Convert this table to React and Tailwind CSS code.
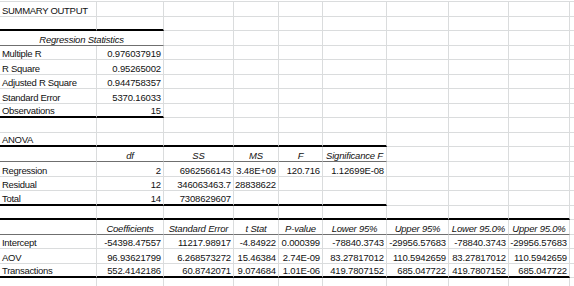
import React from "react";

// column widths of the sheet, A..I (J takes what is left)
const W = [
  "w-[97px]",
  "w-[67px]",
  "w-[70px]",
  "w-[45px]",
  "w-[44px]",
  "w-[64px]",
  "w-[62px]",
  "w-[60px]",
  "w-[61px]",
];

const rows = [
  { cells: ["SUMMARY OUTPUT"] },
  { cells: [], thick: 2 },
  { merged: "Regression Statistics", thin: 2 },
  { cells: ["Multiple R", "0.976037919"] },
  { cells: ["R Square", "0.95265002"] },
  { cells: ["Adjusted R Square", "0.944758357"] },
  { cells: ["Standard Error", "5370.16033"] },
  { cells: ["Observations", "15"], thick: 2 },
  { cells: [] },
  { cells: ["ANOVA"], thick: 6 },
  { cells: ["", "df", "SS", "MS", "F", "Significance F"], header: true, thin: 6 },
  { cells: ["Regression", "2", "6962566143", "3.48E+09", "120.716", "1.12699E-08"] },
  { cells: ["Residual", "12", "346063463.7", "28838622"] },
  { cells: ["Total", "14", "7308629607"], thick: 6 },
  { cells: [], thick: 9 },
  {
    cells: [
      "",
      "Coefficients",
      "Standard Error",
      "t Stat",
      "P-value",
      "Lower 95%",
      "Upper 95%",
      "Lower 95.0%",
      "Upper 95.0%",
    ],
    header: true,
    thin: 9,
  },
  {
    cells: [
      "Intercept",
      "-54398.47557",
      "11217.98917",
      "-4.84922",
      "0.000399",
      "-78840.3743",
      "-29956.57683",
      "-78840.3743",
      "-29956.57683",
    ],
  },
  {
    cells: [
      "AOV",
      "96.93621799",
      "6.268573272",
      "15.46384",
      "2.74E-09",
      "83.27817012",
      "110.5942659",
      "83.27817012",
      "110.5942659",
    ],
  },
  {
    cells: [
      "Transactions",
      "552.4142186",
      "60.8742071",
      "9.074684",
      "1.01E-06",
      "419.7807152",
      "685.047722",
      "419.7807152",
      "685.047722",
    ],
    thick: 9,
  },
  { cells: [] },
  { cells: [] },
];

function bottomClass(row, i) {
  if (row.thick && i < row.thick) return "border-b-2 border-b-black";
  if (row.thin && i < row.thin) return "border-b border-b-[#6f6f6f]";
  return "border-b border-b-[#dadcdd]";
}

function Cell({ row, i }) {
  const text = row.cells ? row.cells[i] || "" : "";
  let align = "justify-end pr-[2px] tracking-[-0.15px]";
  if (i === 0) align = "justify-start pl-[2px] tracking-[-0.3px]";
  if (row.header && i > 0) align = "justify-center italic tracking-[-0.2px]";

  return (
    <div
      className={`${W[i]} shrink-0 h-full flex items-end overflow-visible whitespace-nowrap border-r border-r-[#dadcdd] ${bottomClass(row, i)} ${align}`}
    >
      <span className="leading-[11px]">{text}</span>
    </div>
  );
}

export default function App() {
  return (
    <div
      className="w-[574px] h-[286px] overflow-hidden bg-white text-[#111] text-[9.5px]"
      style={{ fontFamily: '"Liberation Sans", Arial, sans-serif' }}
    >
      <div className="h-[2px] border-b border-b-[#dadcdd]" />

      {rows.map((row, r) => (
        <div key={r} className="h-[14.55px] flex">
          {row.merged ? (
            <>
              <div
                className={`w-[164px] shrink-0 h-full flex items-end justify-center italic tracking-[-0.2px] whitespace-nowrap border-r border-r-[#dadcdd] ${bottomClass(row, 0)}`}
              >
                <span className="leading-[11px]">{row.merged}</span>
              </div>
              {[2, 3, 4, 5, 6, 7, 8].map((i) => (
                <Cell key={i} row={{}} i={i} />
              ))}
            </>
          ) : (
            [0, 1, 2, 3, 4, 5, 6, 7, 8].map((i) => <Cell key={i} row={row} i={i} />)
          )}
          <div className="flex-1 h-full border-b border-b-[#dadcdd]" />
        </div>
      ))}
    </div>
  );
}
